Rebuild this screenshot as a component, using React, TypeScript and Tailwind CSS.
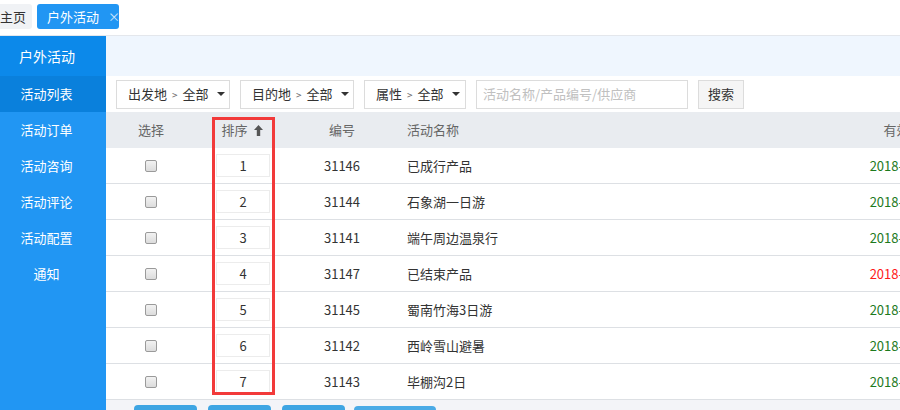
import React from "react";

const rows = [
  { n: 1, id: "31146", name: "已成行产品", red: false },
  { n: 2, id: "31144", name: "石象湖一日游", red: false },
  { n: 3, id: "31141", name: "端午周边温泉行", red: false },
  { n: 4, id: "31147", name: "已结束产品", red: true },
  { n: 5, id: "31145", name: "蜀南竹海3日游", red: false },
  { n: 6, id: "31142", name: "西岭雪山避暑", red: false },
  { n: 7, id: "31143", name: "毕棚沟2日", red: false },
];

const menu = ["活动列表", "活动订单", "活动咨询", "活动评论", "活动配置", "通知"];

function Caret() {
  return (
    <svg width="8" height="4" viewBox="0 0 8 4" className="ml-[8px] shrink-0">
      <path d="M0 0 L8 0 L4 4 Z" fill="#333" />
    </svg>
  );
}

function Dropdown({ label, w }: { label: string; w: string }) {
  return (
    <div className={`${w} shrink-0 h-[29px] border border-[#dcdcdc] bg-white flex items-center pl-[11px] text-[13px] text-[#333] whitespace-nowrap`}>
      <span>{label}</span>
      <span className="mx-[5px] text-[10px] text-[#666]">&gt;</span>
      <span>全部</span>
      <Caret />
    </div>
  );
}

export default function App() {
  return (
    <div
      className="w-[900px] h-[410px] overflow-hidden bg-white flex flex-col"
      style={{ fontFamily: '"Noto Sans CJK SC", "Noto Sans", sans-serif' }}
    >
      {/* Tab bar */}
      <div className="h-[36px] shrink-0 border-b border-[#e4e7ec] flex items-center gap-[5px] pb-[2px]">
        <div className="h-[25px] w-[32px] shrink-0 bg-[#f0f2f5] rounded-r-[3px] flex items-center justify-end pr-[6px] text-[13px] text-[#333]">
          <span className="whitespace-nowrap">主页</span>
        </div>
        <div className="h-[25px] w-[82px] shrink-0 bg-[#2196f3] rounded-[3px] flex items-center pl-[10px] text-[13px] text-white whitespace-nowrap">
          <span>户外活动</span>
          <span className="ml-[9px] text-[12px] text-[#cfe6fb]">×</span>
        </div>
      </div>

      <div className="flex flex-1 min-h-0">
        {/* Sidebar */}
        <div className="w-[106px] shrink-0 bg-[#2196f3] flex flex-col text-white">
          <div className="h-[40px] bg-[#0c89ea] flex items-center pl-[19px] text-[14px]">户外活动</div>
          {menu.map((m, i) => (
            <div
              key={m}
              className={`h-[36px] flex items-center justify-center pr-[13px] text-[13px] ${i === 0 ? "bg-[#0a80dc]" : ""}`}
            >
              {m}
            </div>
          ))}
        </div>

        {/* Main */}
        <div className="flex-1 min-w-0 flex flex-col overflow-hidden">
          <div className="h-[40px] shrink-0 bg-[#eff6fe]" />
          <div className="h-[36px] shrink-0 flex items-center pl-[10px] gap-[10px]">
            <Dropdown label="出发地" w="w-[114px]" />
            <Dropdown label="目的地" w="w-[114px]" />
            <Dropdown label="属性" w="w-[102px]" />
            <div className="w-[212px] shrink-0 h-[29px] border border-[#dcdcdc] flex items-center pl-[6px] text-[13px] text-[#c0c0c0] whitespace-nowrap">
              活动名称/产品编号/供应商
            </div>
            <div className="w-[46px] shrink-0 h-[29px] border border-[#dcdcdc] bg-[#f5f5f5] flex items-center justify-center text-[13px] text-[#333]">
              搜索
            </div>
          </div>

          {/* Table */}
          <div className="relative w-[960px] text-[13px]">
            <div className="h-[36px] bg-[#e9ecf0] flex items-center text-[#666]">
              <div className="w-[90px] text-center">选择</div>
              <div className="w-[94px] flex items-center justify-center pr-[2px]">
                <span>排序</span>
                <svg width="9" height="11" viewBox="0 0 9 11" className="ml-[6px]">
                  <path d="M4.5 0 L9 5 L6.2 5 L6.2 11 L2.8 11 L2.8 5 L0 5 Z" fill="#555" />
                </svg>
              </div>
              <div className="w-[104px] text-center">编号</div>
              <div className="w-[468px] pl-[13px]">活动名称</div>
              <div className="w-[82px] text-center whitespace-nowrap">有效期</div>
            </div>
            {rows.map((r) => (
              <div key={r.n} className="h-[36px] flex items-center border-b border-[#dde0e4] text-[#333]">
                <div className="w-[90px] flex justify-center">
                  <div className="w-[12px] h-[12px] rounded-[2px] border border-[#9a9a9a] bg-gradient-to-b from-[#f2f2f2] to-[#dcdcdc]" />
                </div>
                <div className="w-[94px] flex justify-center">
                  <div className="w-[54px] h-[23px] border border-[#ececec] flex items-center justify-center">{r.n}</div>
                </div>
                <div className="w-[104px] text-center">{r.id}</div>
                <div className="w-[468px] pl-[13px]">{r.name}</div>
                <div className={`w-[82px] text-center whitespace-nowrap ${r.red ? "text-[#ff1a1a]" : "text-[#1d7a1d]"}`}>2018-06-01</div>
              </div>
            ))}
            <div className="absolute left-[106px] top-[5px] w-[63px] h-[278px] border-[3px] border-[#f23a3a]" />
          </div>

          {/* Bottom */}
          <div className="flex-1 bg-[#f3f4f8] flex items-start pt-[5px] pl-[28px] gap-[11px]">
            <div className="w-[63px] h-[10px] bg-[#3ea5e3] rounded-t-[4px]" />
            <div className="w-[63px] h-[10px] bg-[#3ea5e3] rounded-t-[4px]" />
            <div className="w-[63px] h-[10px] bg-[#3ea5e3] rounded-t-[4px]" />
            <div className="w-[82px] h-[10px] mt-[1px] bg-[#4aaae6] rounded-t-[4px] -ml-[2px]" />
          </div>
        </div>
      </div>
    </div>
  );
}
